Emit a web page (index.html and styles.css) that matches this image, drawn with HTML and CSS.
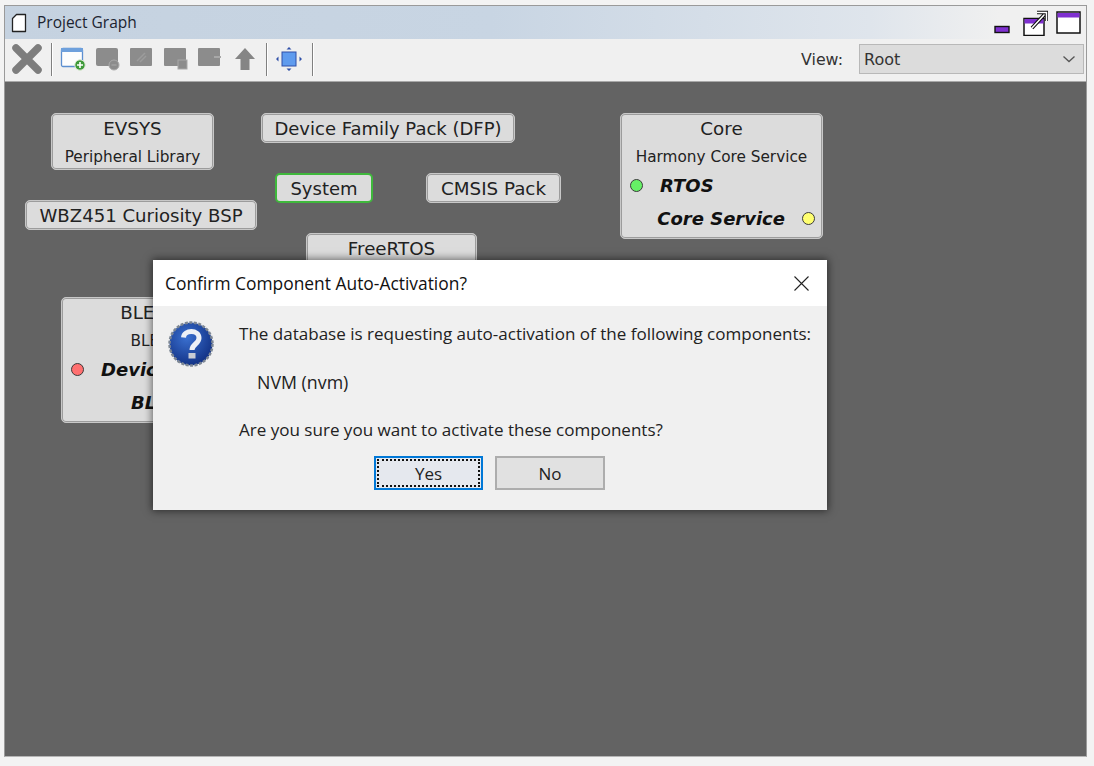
FILE: index.html
```html
<!DOCTYPE html>
<html lang="en">
<head>
<meta charset="utf-8">
<title>Project Graph</title>
<link rel="stylesheet" href="styles.css">
</head>
<body>
<div class="window">
  <header class="titlebar">
    <svg class="doc-icon" width="16" height="20" viewBox="0 0 16 20"><path d="M5.5 1.5H14.5V18.5H1.5V5.5Z" fill="#fff" stroke="#222" stroke-width="1.3" stroke-linejoin="round"/></svg>
    <span class="title">Project Graph</span>
    <div class="win-controls">
      <svg class="ctl-min" width="16" height="10" viewBox="0 0 16 10"><rect x="1" y="1.5" width="14" height="6" fill="#7f30d0" stroke="#111" stroke-width="1.4"/></svg>
      <svg class="ctl-restore" width="25" height="26" viewBox="0 0 25 26"><rect x="1" y="8.500" width="20" height="17" fill="#fff" stroke="#111" stroke-width="1.500"/><rect x="1.500" y="9" width="19" height="4.500" fill="#7f30d0"/><path d="M9 18L21 5M14 2.500H23.500V11" fill="none" stroke="#111" stroke-width="3.600"/><path d="M9 18L21 5M14 2.500H23.500V11" fill="none" stroke="#fff" stroke-width="1.500"/></svg>
      <svg class="ctl-max" width="25" height="23" viewBox="0 0 25 23"><rect x="1" y="1" width="23" height="21" fill="#fff" stroke="#111" stroke-width="1.500"/><rect x="1.500" y="2" width="22" height="4.500" fill="#7f30d0"/></svg>
    </div>
  </header>
  <div class="toolbar">
    <svg class="tool tool-x" width="30" height="30" viewBox="0 0 30 30"><path d="M4 4L26 26M26 4L4 26" stroke="#7d7d7d" stroke-width="7.500" stroke-linecap="round"/></svg>
    <span class="sep"></span>
    <svg class="tool tool-new" width="26" height="24" viewBox="0 0 26 24"><rect x="1.500" y="1.500" width="21" height="18" rx="1.500" fill="#fdfdfd" stroke="#5d8fd0" stroke-width="1.300"/><rect x="1" y="1" width="22" height="4" fill="#6ea0dc"/><circle cx="20" cy="18" r="5.200" fill="#3f9a3a" stroke="#d8e8d0"/><path d="M20 15V21M17 18H23" stroke="#fff" stroke-width="1.600"/></svg>
    <svg class="tool" width="26" height="24" viewBox="0 0 26 24"><rect x="1" y="1" width="22" height="18" rx="2" fill="#8c8c8c"/><circle cx="19" cy="18" r="5" fill="#8c8c8c" stroke="#aaa"/><path d="M16.500 18H21.500" stroke="#aaa"/></svg>
    <svg class="tool" width="26" height="24" viewBox="0 0 26 24"><rect x="1" y="1" width="22" height="18" rx="1" fill="#8c8c8c"/><path d="M8 14L16 6M11 15L17 9" stroke="#9c9c9c" stroke-width="1.500"/></svg>
    <svg class="tool" width="26" height="24" viewBox="0 0 26 24"><rect x="1" y="1" width="22" height="18" rx="1" fill="#8c8c8c"/><rect x="15" y="13" width="9" height="9" fill="#8c8c8c" stroke="#a8a8a8"/></svg>
    <svg class="tool" width="26" height="24" viewBox="0 0 26 24"><rect x="1" y="1" width="22" height="18" rx="1" fill="#8c8c8c"/><path d="M17 10L24 10" stroke="#a8a8a8" stroke-width="2"/></svg>
    <svg class="tool tool-up" width="24" height="24" viewBox="0 0 24 24"><path d="M12 1L22 12H16.500V23H7.500V12H2Z" fill="#858585"/></svg>
    <span class="sep"></span>
    <svg class="tool tool-fit" width="28" height="26" viewBox="0 0 28 26"><rect x="7" y="6" width="14" height="14" fill="#5f9bee" stroke="#2f4fa8"/><path d="M14 1L11.500 3.500H16.500ZM14 25L11.500 22.500H16.500ZM1 13L3.500 10.500V15.500ZM27 13L24.500 10.500V15.500Z" fill="#2f4fa8"/></svg>
    <span class="sep"></span>
    <label class="view-label">View:</label>
    <div class="combo"><span>Root</span><svg width="14" height="8" viewBox="0 0 14 8"><path d="M1.500 1.500L7 6.500L12.500 1.500" fill="none" stroke="#555" stroke-width="1.300"/></svg></div>
  </div>
  <main class="canvas">
    <div class="node node-evsys"><div class="n-title">EVSYS</div><div class="n-sub">Peripheral Library</div></div>
    <div class="node node-dfp"><div class="n-title">Device Family Pack (DFP)</div></div>
    <div class="node node-system"><div class="n-title">System</div></div>
    <div class="node node-cmsis"><div class="n-title">CMSIS Pack</div></div>
    <div class="node node-bsp"><div class="n-title">WBZ451 Curiosity BSP</div></div>
    <div class="node node-rtos"><div class="n-title">FreeRTOS</div></div>
    <div class="node node-core">
      <div class="n-title">Core</div>
      <div class="n-sub">Harmony Core Service</div>
      <div class="port port-left"><i class="dot dot-green"></i><b>RTOS</b></div>
      <div class="port port-right"><b>Core Service</b><i class="dot dot-yellow"></i></div>
    </div>
    <div class="node node-ble">
      <div class="n-title ble-title">BLE Stack</div>
      <div class="n-sub ble-sub">BLE Stack</div>
      <div class="port port-left ble-p1"><i class="dot dot-red"></i><b>Device Support</b></div>
      <div class="port ble-p2"><b>BLE Stack</b></div>
    </div>
  </main>
</div>
<section class="dialog">
  <div class="dlg-head">
    <span>Confirm Component Auto-Activation?</span>
    <svg width="15" height="15" viewBox="0 0 15 15"><path d="M.5 .5L14.500 14.500M14.500 .5L.5 14.500" stroke="#222" stroke-width="1.100"/></svg>
  </div>
  <div class="dlg-body">
    <svg class="q-icon" width="48" height="48" viewBox="0 0 48 48">
      <defs><radialGradient id="qg" cx=".4" cy=".35" r=".75"><stop offset="0" stop-color="#3a70d0"/><stop offset="1" stop-color="#0d2a7c"/></radialGradient></defs>
      <circle cx="24" cy="24" r="21.500" fill="url(#qg)" stroke="#7d8794" stroke-width="2.500" stroke-dasharray="3 1.500"/>
      <path d="M16.500 17.500C17 9.500 32 9.500 32 18C32 24 25 24 25 30" fill="none" stroke="#eef1f6" stroke-width="5"/>
      <rect x="21.500" y="33" width="7" height="5.500" fill="#c8ccd4"/>
    </svg>
    <div class="dlg-text">
      <p class="msg">The database is requesting auto-activation of the following components:</p>
      <p class="item">NVM (nvm)</p>
      <p class="msg ask">Are you sure you want to activate these components?</p>
    </div>
    <div class="dlg-buttons">
      <button class="btn btn-default"><span>Yes</span></button>
      <button class="btn">No</button>
    </div>
  </div>
</section>
</body>
</html>
```
FILE: styles.css
```css
* { box-sizing: border-box; }
html, body { margin: 0; height: 100%; }
body {
  width: 1094px; height: 766px; overflow: hidden; position: relative;
  background: #f3f3f3; padding: 5px 7px 9px 4px;
  font-family: "DejaVu Sans", sans-serif; color: #222;
}
.window {
  height: 752px; display: flex; flex-direction: column;
  border: 1px solid #9a9a9a; border-bottom-color: #b5b5b5;
  background: #f0f0f0;
}
.titlebar {
  height: 33px; flex: none; display: flex; align-items: center;
  padding-left: 6px;
  background: linear-gradient(90deg, #c5d2e0 0%, #c8d5e3 45%, #dfe5ec 80%, #f0f0f0 92%);
}
.doc-icon { flex: none; margin-right: 10px; }
.title { font-family: "Open Sans", sans-serif; font-size: 15.500px; color: #1c2430; position: relative; top: -1px; }
.win-controls { margin-left: auto; display: flex; align-items: flex-end; padding-right: 5px; height: 29px; }
.ctl-min { margin-right: 13px; margin-bottom: 2px; }
.ctl-restore { margin-right: 8px; margin-bottom: 1px; }
.ctl-max { margin-bottom: 3px; }
.toolbar {
  height: 43px; flex: none; display: flex; align-items: center;
  padding: 0 0 2px 7px; border-bottom: 1px solid #a8a8a8; background: #f0f0f0;
}
.tool { flex: none; margin-right: 8px; }
.tool-x { margin-right: 9px; }
.tool-new { margin-right: 9px; }
.tool-up { margin-left: 2px; margin-right: 9px; }
.tool-fit { margin-right: 9px; }
.sep { flex: none; width: 1px; height: 33px; background: #808080; margin: 0 8px 0 0; box-shadow: 1px 0 0 #fff; }
.view-label { margin-left: auto; font-family: "DejaVu Sans", sans-serif; font-size: 15.800px; color: #333; margin-right: 16px; }
.combo {
  width: 225px; height: 30px; margin-right: 2px; display: flex; align-items: center; justify-content: space-between;
  padding: 0 7px 0 4px; background: #dcdcdc; border: 1px solid #b8b8b8;
  font-size: 16px; color: #333;
}
.canvas { flex: 1; position: relative; background: #636363; overflow: hidden; }
.node {
  position: absolute; background: #dcdcdc; border: 1px solid #c8c8c8;
  box-shadow: inset 0 0 0 1px #9c9c9c; border-radius: 5px; text-align: center;
  color: #222; overflow: hidden; padding-top: 2px;
}
.n-title { font-size: 18.300px; line-height: 26px; }
.n-sub { font-size: 15.300px; line-height: 18px; margin-top: 6px; }
.node-evsys { left: 46px; top: 31px; width: 163px; height: 57px; }
.node-dfp { left: 256px; top: 31px; width: 254px; height: 30px; }
.node-dfp .n-title { font-size: 18px; }
.node-system { left: 270px; top: 91px; width: 98px; height: 30px; border: 2px solid #3fb83c; box-shadow: none; padding-top: 1px; }
.node-system .n-title { font-size: 18px; }
.node-cmsis { left: 421px; top: 91px; width: 135px; height: 30px; }
.node-bsp { left: 20px; top: 118px; width: 232px; height: 30px; }
.node-bsp .n-title { font-size: 18.100px; }
.node-rtos { left: 301px; top: 151px; width: 171px; height: 40px; }
.node-core { left: 615px; top: 31px; width: 203px; height: 126px; }
.node-ble { left: 56px; top: 215px; width: 203px; height: 126px; }
.port { display: flex; align-items: center; font-size: 18px; line-height: 33px; font-family: "DejaVu Sans", sans-serif; color: #111; font-style: italic; }
.port b { font-weight: 700; }
.port-left { padding-left: 9px; margin-top: 3px; }
.port-left b { margin-left: 17px; }
.port-right { justify-content: flex-end; padding-right: 7px; }
.port-right b { margin-right: 17px; }
.dot { flex: none; width: 13px; height: 13px; border-radius: 50%; border: 1.500px solid #3a3a3a; }
.dot-green { background: #66f066; }
.dot-yellow { background: #ffff70; }
.dot-red { background: #ff7070; }
.ble-title { padding-left: 6px; }
.ble-sub { padding-left: 12px; }
.ble-p2 { padding-left: 69px; white-space: nowrap; }
.dialog {
  position: absolute; left: 153px; top: 260px; width: 674px; height: 250px;
  background: #f0f0f0; box-shadow: 0 0 8px 1px rgba(0,0,0,.55);
  font-family: "Open Sans", sans-serif; color: #222;
}
.dlg-head {
  height: 46px; background: #fff; display: flex; align-items: center; justify-content: space-between;
  padding: 0 18px 0 12px; font-size: 17.400px; color: #111;
}
.dlg-body { position: relative; height: 204px; padding: 16px 0 0 86px; }
.q-icon { position: absolute; left: 14px; top: 14px; }
.dlg-text { font-size: 17.050px; }
.dlg-text p { margin: 0; line-height: 24px; }
.item { margin-top: 24px !important; padding-left: 18px; font-size: 17.800px; }
.ask { margin-top: 24px !important; }
.dlg-buttons { display: flex; justify-content: center; gap: 12px; margin-top: 14px; margin-left: -86px; padding-right: 1px; }
.btn {
  width: 110px; height: 34px; font: 17px "Open Sans", sans-serif; color: #222;
  background: #e1e1e1; border: 2px solid #adadad; padding: 0;
}
.btn-default { border-color: #0078d7; background: #e5e8ee; padding: 1px; width: 109px; }
.btn-default span { display: block; height: 100%; line-height: 26px; border: 2px dotted #111; }
```
